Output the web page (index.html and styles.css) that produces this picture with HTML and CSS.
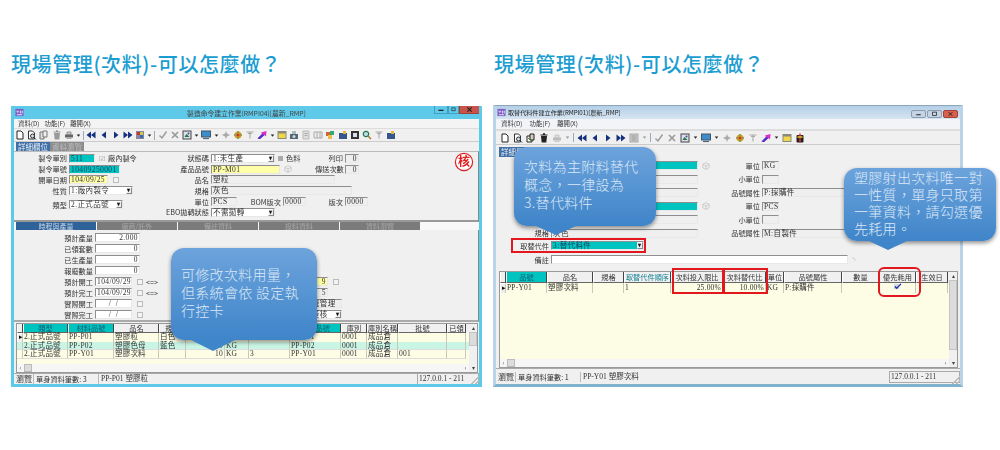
FILE: index.html
```html
<!DOCTYPE html>
<html lang="zh-Hant">
<head>
<meta charset="utf-8">
<title>現場管理(次料)</title>
<link rel="stylesheet" href="styles.css">
</head>
<body>
<svg class="defs" width="0" height="0">
  <symbol id="i-doc" viewBox="0 0 10 10"><path d="M2 1h4l2 2v6H2z" fill="#fff" stroke="#222"/></symbol>
  <symbol id="i-prev" viewBox="0 0 10 10"><path d="M1.500 1h4l2 2v6h-6z" fill="#fff" stroke="#333"/><circle cx="5.500" cy="6" r="2" fill="#cde" stroke="#333"/><path d="M7 7.500l2 2" stroke="#333"/></symbol>
  <symbol id="i-copy" viewBox="0 0 10 10"><path d="M1 2h4v7H1z" fill="#ddd" stroke="#777"/><path d="M4 1h4v6H4z" fill="#eee" stroke="#777"/></symbol>
  <symbol id="i-copyd" viewBox="0 0 10 10"><path d="M1 3h5v6H1z" fill="#fff" stroke="#222"/><path d="M4 1h4v6H4z" fill="#dcb" stroke="#222"/><path d="M2 5l4 3" stroke="#2a7a2a"/></symbol>
  <symbol id="i-trash" viewBox="0 0 10 10"><path d="M2 3h6l-.7 6.500H2.700z" fill="#999"/><path d="M1.500 2h7M4 .8h2" stroke="#999" stroke-width="1.200"/></symbol>
  <symbol id="i-trashd" viewBox="0 0 10 10"><path d="M2 3h6l-.7 6.500H2.700z" fill="#222"/><path d="M1.500 2h7M4 .8h2" stroke="#222" stroke-width="1.200"/></symbol>
  <symbol id="i-print" viewBox="0 0 10 10"><path d="M1 4.500h8v3H1z" fill="#666"/><path d="M3 2h4v2.500H3z" fill="#ccc" stroke="#666" stroke-width=".6"/><path d="M2.500 7.500h5v1.500h-5z" fill="#aaa"/></symbol>
  <symbol id="i-printl" viewBox="0 0 10 10"><path d="M1 4.500h8v3H1z" fill="#bbb"/><path d="M3 2h4v2.500H3z" fill="#ddd" stroke="#bbb" stroke-width=".6"/><path d="M2.500 7.500h5v1.500h-5z" fill="#ccc"/></symbol>
  <symbol id="i-first" viewBox="0 0 10 10"><path d="M5 1.500v7L.5 5zM9.500 1.500v7L5 5z" fill="#14307f"/></symbol>
  <symbol id="i-left" viewBox="0 0 10 10"><path d="M7 1.500v7L2.500 5z" fill="#14307f"/></symbol>
  <symbol id="i-right" viewBox="0 0 10 10"><path d="M3 1.500v7L7.500 5z" fill="#14307f"/></symbol>
  <symbol id="i-last" viewBox="0 0 10 10"><path d="M.5 1.500v7L5 5zM5 1.500v7L9.500 5z" fill="#14307f"/></symbol>
  <symbol id="i-pic" viewBox="0 0 10 10"><rect x="1" y="1" width="8" height="8" fill="#889"/><path d="M2 2h3v3H2z" fill="#c33"/><path d="M5 5h3v3H5z" fill="#36b"/><path d="M5 2h3v3H5z" fill="#cc4"/></symbol>
  <symbol id="i-picl" viewBox="0 0 10 10"><rect x="1" y="1" width="8" height="8" fill="#ccc" stroke="#aaa"/><path d="M2.500 3h5M2.500 5h5M2.500 7h5" stroke="#999"/></symbol>
  <symbol id="i-check" viewBox="0 0 10 10"><path d="M1.500 5.500L4 8l4.500-6.500" fill="none" stroke="#999" stroke-width="1.400"/></symbol>
  <symbol id="i-x" viewBox="0 0 10 10"><path d="M2 2l6 6M8 2L2 8" stroke="#999" stroke-width="1.600"/></symbol>
  <symbol id="i-img" viewBox="0 0 10 10"><rect x="1" y="1" width="8" height="8" fill="#dde" stroke="#444"/><path d="M2.500 7l2-3 3 3z" fill="#274"/><circle cx="6.500" cy="3.500" r="1" fill="#357"/></symbol>
  <symbol id="i-screen" viewBox="0 0 10 10"><rect x=".5" y="1" width="9" height="6" fill="#3b8ecb" stroke="#456"/><path d="M2 8.500h6" stroke="#567" stroke-width="1.200"/></symbol>
  <symbol id="i-gear" viewBox="0 0 10 10"><path d="M5 1l1 2.500L9 5 6 6.500 5 9 4 6.500 1 5l3-1.500z" fill="#aaa"/></symbol>
  <symbol id="i-flower" viewBox="0 0 10 10"><circle cx="5" cy="5" r="3.500" fill="#c9a227"/><circle cx="5" cy="5" r="1.500" fill="#c33"/><path d="M5 1v1.500M5 7.500V9M1 5h1.500M7.500 5H9" stroke="#3a7a3a"/></symbol>
  <symbol id="i-t" viewBox="0 0 10 10"><path d="M1.500 2h7M5 2v6.500M3 3.500h4" stroke="#aaa" stroke-width="1.100" fill="none"/></symbol>
  <symbol id="i-arrow" viewBox="0 0 10 10"><path d="M.5 8.500L5 4l-1-1.500L9.500 1 9 6.500 7.500 5 3 9z" fill="#d92cc8"/><path d="M5 4L7.500 5 3 9 .5 8.500z" fill="#4636c9"/></symbol>
  <symbol id="i-folder" viewBox="0 0 10 10"><rect x=".5" y="1" width="9" height="8" fill="#8a8a7a"/><path d="M1.500 3.500h7v4.500h-7z" fill="#ecd84a"/></symbol>
  <symbol id="i-db" viewBox="0 0 10 10"><path d="M1 4h8v5H1z" fill="#567"/><path d="M3 1h4v3H3z" fill="#abb"/><circle cx="5" cy="6.500" r="1.500" fill="#cdd"/></symbol>
  <symbol id="i-gray" viewBox="0 0 10 10"><path d="M2 1h6v8H2z" fill="#ddd" stroke="#bbb"/><path d="M3.500 3.500h3M3.500 5.500h3" stroke="#aaa"/></symbol>
  <symbol id="i-grid2" viewBox="0 0 10 10"><path d="M1 2h8v6H1z" fill="#eee" stroke="#aaa"/><path d="M4 2v6M7 2v6" stroke="#aaa"/></symbol>
  <symbol id="i-colors" viewBox="0 0 10 10"><path d="M1 2h4v4H1z" fill="#c63"/><path d="M5 1h4v4H5z" fill="#3a7"/><path d="M3 5h4v4H3z" fill="#eb4"/></symbol>
  <symbol id="i-app" viewBox="0 0 10 10"><rect x=".5" y="1" width="9" height="8" fill="#7c5cc4"/><path d="M2 3l1 2 1-2M6 3v3M8 3v3M2 7.500h6" stroke="#fff" fill="none" stroke-width=".9"/></symbol>
  <symbol id="i-blue" viewBox="0 0 10 10"><rect x="1" y="3" width="8" height="6" fill="#35558f"/><path d="M5 1h3v3H5z" fill="#e2b93b"/></symbol>
  <symbol id="i-film" viewBox="0 0 10 10"><rect x="1" y="1" width="8" height="8" fill="#333"/><rect x="3" y="3" width="4" height="4" fill="#dde"/></symbol>
  <symbol id="i-mag" viewBox="0 0 10 10"><circle cx="4" cy="4" r="2.700" fill="#bde" stroke="#274" stroke-width="1.200"/><path d="M6 6l3 3" stroke="#a73" stroke-width="1.500"/></symbol>
  <symbol id="i-gift" viewBox="0 0 10 10"><rect x="1.500" y="2" width="7" height="7.500" rx="1" fill="#222"/><path d="M5 .5v9" stroke="#d33" stroke-width="1.500"/><path d="M2.500 4h5" stroke="#e8c62a" stroke-width="1.500"/></symbol>
  <symbol id="i-dd" viewBox="0 0 10 10"><path d="M1.500 3h7L5 7.500z" fill="#222"/></symbol>
  <symbol id="i-ddl" viewBox="0 0 10 10"><path d="M1.500 3h7L5 7.500z" fill="#999"/></symbol>
  <symbol id="i-cube" viewBox="0 0 10 10"><path d="M5 .8L9 3v4.200L5 9.300 1 7.200V3zM1 3l4 2 4-2M5 5v4.300" fill="none" stroke="#bbb" stroke-width=".8"/></symbol>
  <symbol id="i-min" viewBox="0 0 14 8"><path d="M4 5h6" stroke="#222" stroke-width="1.500"/></symbol>
  <symbol id="i-max" viewBox="0 0 14 8"><rect x="4.500" y="1.500" width="5" height="4.500" fill="none" stroke="#222"/></symbol>
  <symbol id="i-close" viewBox="0 0 14 8"><path d="M4.500 1.500l5 5M9.500 1.500l-5 5" stroke="#222" stroke-width="1.300"/></symbol>
</svg>

<main class="page">

<section class="pane">
  <h1 class="heading">現場管理(次料)-可以怎麼做？</h1>
  <div class="win win-a">
    <div class="titlebar">
      <svg class="app"><use href="#i-app"/></svg>
      <span class="title-text">製造命令建立作業(RMPI04)[農新_RMP]</span>
      <div class="caps caps-a"><svg class="cap"><use href="#i-min"/></svg><svg class="cap cap-m"><use href="#i-max"/></svg><svg class="cap cap-x"><use href="#i-close"/></svg></div>
    </div>
    <div class="menu"><span>資料(D)</span><span>功能(F)</span><span>離開(X)</span></div>
    <div class="toolbar tb-a">
      <svg class="i"><use href="#i-doc"/></svg><svg class="i"><use href="#i-prev"/></svg><svg class="i"><use href="#i-copy"/></svg><svg class="i"><use href="#i-trash"/></svg><svg class="i"><use href="#i-print"/></svg><svg class="dd"><use href="#i-dd"/></svg><i class="sep"></i>
      <svg class="i"><use href="#i-first"/></svg><svg class="i"><use href="#i-left"/></svg><svg class="i"><use href="#i-right"/></svg><svg class="i"><use href="#i-last"/></svg><svg class="i"><use href="#i-pic"/></svg><svg class="dd"><use href="#i-dd"/></svg><i class="sep"></i>
      <svg class="i"><use href="#i-check"/></svg><svg class="i"><use href="#i-x"/></svg><svg class="i"><use href="#i-img"/></svg><svg class="dd"><use href="#i-dd"/></svg><svg class="i"><use href="#i-screen"/></svg><svg class="dd"><use href="#i-dd"/></svg>
      <svg class="i"><use href="#i-gear"/></svg><svg class="i"><use href="#i-flower"/></svg><svg class="i"><use href="#i-t"/></svg><svg class="i"><use href="#i-arrow"/></svg><svg class="dd"><use href="#i-dd"/></svg><svg class="i"><use href="#i-folder"/></svg><svg class="i"><use href="#i-db"/></svg><svg class="i"><use href="#i-gray"/></svg><svg class="i"><use href="#i-grid2"/></svg><svg class="i"><use href="#i-colors"/></svg><svg class="i"><use href="#i-blue"/></svg><svg class="i"><use href="#i-film"/></svg><svg class="i"><use href="#i-mag"/></svg><svg class="i"><use href="#i-t"/></svg><svg class="i"><use href="#i-blue"/></svg>
    </div>
    <div class="tabs tabs-a"><span class="tab on">詳細欄位</span><span class="tab">資料瀏覽</span></div>
    <div class="head-form">
      <div class="col col-a1">
        <div class="row"><label class="lb w52">製令單別</label><span class="f teal w26">511</span><span class="mk">☑</span><span class="tx">廠內製令</span></div>
        <div class="row"><label class="lb w52">製令單號</label><span class="f teal w51">10409250001</span></div>
        <div class="row"><label class="lb w52">開單日期</label><span class="f yel w39">104/09/25</span><span class="ck"></span></div>
        <div class="row"><label class="lb w52">性質</label><span class="f white w64 sel">1:廠內製令<b class="arr">▾</b></span></div>
        <div class="row row-gap"><label class="lb w52">類型</label><span class="f white w54 sel">2.正式品號<b class="arr">▾</b></span></div>
      </div>
      <div class="col col-a2">
        <div class="row"><label class="lb w52">狀態碼</label><span class="f white w64 sel">1:未生產<b class="arr">▾</b></span><span class="sq"></span><span class="tx">色料</span></div>
        <div class="row"><label class="lb w52">產品品號</label><span class="f yel w69">PP-M01</span><svg class="cube"><use href="#i-cube"/></svg></div>
        <div class="row"><label class="lb w52">品名</label><span class="f gray w124">塑粒</span></div>
        <div class="row"><label class="lb w52">規格</label><span class="f gray w141">灰色</span></div>
        <div class="row"><label class="lb w52">單位</label><span class="f gray w26">PCS</span><label class="lb w46">BOM版次</label><span class="f gray w23">0000</span></div>
        <div class="row"><label class="lb w52">EBO拋轉狀態</label><span class="f white w64 sel">不需拋轉<b class="arr">▾</b></span></div>
      </div>
      <div class="col col-a3">
        <div class="row"><label class="lb w30">列印</label><span class="f gray w13 r">0</span></div>
        <div class="row"><label class="lb w30">傳送次數</label><span class="f gray w13 r">0</span></div>
        <div class="row"></div><div class="row"></div>
        <div class="row"><label class="lb w30">版次</label><span class="f gray w23">0000</span></div>
      </div>
      <svg class="stamp" viewBox="0 0 20 20"><circle cx="10" cy="10" r="8.600" fill="#fff" stroke="#e01f1f" stroke-width="1.200"/><text x="10" y="14" text-anchor="middle" class="stamp-t">核</text></svg>
    </div>
    <div class="tabs tabs-b"><span class="tb2 on">時程與產量</span><span class="tb2">廠商/託外</span><span class="tb2">備註資料</span><span class="tb2">投料資料</span><span class="tb2">資料瀏覽</span></div>
    <div class="sched">
      <div class="col">
        <div class="row2"><label class="lb w82">預計產量</label><span class="f white w45 r">2.000</span></div>
        <div class="row2"><label class="lb w82">已領套數</label><span class="f white w45 r">0</span></div>
        <div class="row2"><label class="lb w82">已生產量</label><span class="f white w45 r">0</span></div>
        <div class="row2"><label class="lb w82">報廢數量</label><span class="f white w45 r">0</span></div>
        <div class="row2"><label class="lb w82">預計開工</label><span class="f white w37">104/09/29</span><span class="ck"></span><span class="tx">&lt;=&gt;</span></div>
        <div class="row2"><label class="lb w82">預計完工</label><span class="f white w37">104/09/29</span><span class="ck"></span><span class="tx">&lt;=&gt;</span></div>
        <div class="row2"><label class="lb w82">實際開工</label><span class="f white w37 c">/ &nbsp;/</span><span class="ck"></span></div>
        <div class="row2"><label class="lb w82">實際完工</label><span class="f white w37 c">/ &nbsp;/</span><span class="ck"></span></div>
      </div>
      <div class="col col-s2">
        <div class="row2"><span class="f yel w27 r">9</span><span class="ck"></span></div>
        <div class="row2"><span class="f gray w27 r">5</span></div>
        <div class="row2"><span class="f gray w40 shift">系統管理</span></div>
        <div class="row2"><span class="f white w40 shift sel">子簽核<b class="arr">▾</b></span></div>
      </div>
    </div>
    <div class="grid">
      <div class="g-body">
        <div class="gr gr-a gh"><span></span><span class="tc">類型</span><span class="tc">材料品號</span><span>品名</span><span>規格</span><span>顏色</span><span>單位</span><span>數</span><span class="tc">替代品號</span><span>庫別</span><span>庫別名稱</span><span>批號</span><span>已領</span></div>
        <div class="gr gr-a"><span class="ind">▸</span><span>2.正式品號</span><span>PP-P01</span><span>塑膠粒</span><span>白色</span><span class="r">10</span><span>KG</span><span></span><span>PP-P01</span><span>0001</span><span>成品倉</span><span></span><span></span></div>
        <div class="gr gr-a gn"><span></span><span>2.正式品號</span><span>PP-P02</span><span>塑膠色母</span><span>藍色</span><span class="r">10</span><span>KG</span><span></span><span>PP-P02</span><span>0001</span><span>成品倉</span><span></span><span></span></div>
        <div class="gr gr-a"><span></span><span>2.正式品號</span><span>PP-Y01</span><span>塑膠次料</span><span></span><span class="r">10</span><span>KG</span><span>3</span><span>PP-Y01</span><span>0001</span><span>成品倉</span><span>001</span><span></span></div>
        <div class="g-fill"></div>
        <div class="hs"><span class="hs-a">‹</span><span class="hs-t"></span><span class="hs-b">›</span></div>
      </div>
      <div class="vs"><span class="vs-a">▴</span><span class="vs-t"></span><span class="vs-a end">▾</span></div>
    </div>
    <div class="status">
      <span class="s1">瀏覽</span><span class="s2">單身資料筆數: 3</span><span class="s3">PP-P01 塑膠粒</span><span class="s4">127.0.0.1 - 211</span>
    </div>
  </div>
  <div class="bubble b1">可修改次料用量，<br>但系統會依 設定執<br>行控卡</div>
</section>

<section class="pane pane-b">
  <h1 class="heading">現場管理(次料)-可以怎麼做？</h1>
  <div class="win win-b">
    <div class="titlebar">
      <svg class="app"><use href="#i-app"/></svg>
      <span class="title-text lft">取替代料件建立作業(RMPI01)[農新_RMP]</span>
      <div class="caps caps-b"><svg class="cap"><use href="#i-min"/></svg><svg class="cap"><use href="#i-max"/></svg><svg class="cap cap-x"><use href="#i-close"/></svg></div>
    </div>
    <div class="menu"><span>資料(D)</span><span>功能(F)</span><span>離開(X)</span></div>
    <div class="toolbar tb-b">
      <svg class="i"><use href="#i-doc"/></svg><svg class="i"><use href="#i-prev"/></svg><svg class="i"><use href="#i-copyd"/></svg><svg class="i"><use href="#i-trashd"/></svg><svg class="i"><use href="#i-printl"/></svg><svg class="dd"><use href="#i-ddl"/></svg><i class="sep"></i>
      <svg class="i"><use href="#i-first"/></svg><svg class="i"><use href="#i-left"/></svg><svg class="i"><use href="#i-right"/></svg><svg class="i"><use href="#i-last"/></svg><svg class="i"><use href="#i-picl"/></svg><svg class="dd"><use href="#i-ddl"/></svg><i class="sep"></i>
      <svg class="i"><use href="#i-check"/></svg><svg class="i"><use href="#i-x"/></svg><svg class="i"><use href="#i-img"/></svg><svg class="dd"><use href="#i-dd"/></svg><svg class="i"><use href="#i-screen"/></svg><svg class="dd"><use href="#i-dd"/></svg>
      <svg class="i"><use href="#i-gear"/></svg><svg class="i"><use href="#i-flower"/></svg><svg class="i"><use href="#i-t"/></svg><svg class="i"><use href="#i-arrow"/></svg><svg class="dd"><use href="#i-dd"/></svg><svg class="i"><use href="#i-folder"/></svg><svg class="i"><use href="#i-gift"/></svg>
    </div>
    <div class="tabs tabs-c"><span class="tab on">詳細欄位</span></div>
    <div class="rform">
      <div class="col col-r1">
        <div class="row3"><span class="f teal w147"></span><svg class="cube"><use href="#i-cube"/></svg></div>
        <div class="row3"><span class="f gray w147"></span></div>
        <div class="row3"><span class="f gray w147"></span></div>
        <div class="row3"><span class="f teal w147"></span><svg class="cube"><use href="#i-cube"/></svg></div>
        <div class="row3"><span class="f gray w147"></span></div>
        <div class="row3"><label class="lb w38">規格</label><span class="f gray w147">灰色</span></div>
      </div>
      <div class="col col-r2">
        <div class="row3"><label class="lb w50">單位</label><span class="f gray w17">KG</span></div>
        <div class="row3"><label class="lb w50">小單位</label><span class="f gray w17"></span></div>
        <div class="row3"><label class="lb w50">品號屬性</label><span class="f gray w90">P:採購件</span></div>
        <div class="row3"><label class="lb w50">單位</label><span class="f gray w17">PCS</span></div>
        <div class="row3"><label class="lb w50">小單位</label><span class="f gray w17"></span></div>
        <div class="row3"><label class="lb w50">品號屬性</label><span class="f gray w90">M:自製件</span></div>
      </div>
    </div>
    <div class="row3 r-sub"><label class="lb w38">取替代件</label><span class="f teal w93 sel">3:替代料件<b class="arr">▾</b></span></div>
    <div class="row3 r-note"><label class="lb w38">備註</label><span class="f white w297"></span><span class="note-i">◝</span></div>
    <div class="grid grid-b">
      <div class="g-body">
        <div class="gr gr-b gh"><span></span><span class="tc">品號</span><span>品名</span><span>規格</span><span class="tc2">取替代件順序</span><span>次料投入限比</span><span>次料替代比</span><span>單位</span><span>品號屬性</span><span>數量</span><span>優先耗用</span><span>生效日</span></div>
        <div class="gr gr-b"><span class="ind">▸</span><span>PP-Y01</span><span>塑膠次料</span><span></span><span>1</span><span class="r">25.00%</span><span class="r">10.00%</span><span>KG</span><span>P:採購件</span><span></span><span class="tick"><svg class="tick-i" viewBox="0 0 10 8"><path d="M1 1h6v6H1z" fill="#cdd"/><path d="M2 4l2 2 5-5" fill="none" stroke="#2a2aa8" stroke-width="1.500"/></svg></span><span></span></div>
        <div class="g-fill"></div>
        <div class="hs"><span class="hs-a">‹</span><span class="hs-t"></span><span class="hs-b">›</span></div>
      </div>
      <div class="vs"><span class="vs-a">▴</span><span class="vs-t"></span><span class="vs-a end">▾</span></div>
    </div>
    <div class="status">
      <span class="s1">瀏覽</span><span class="s2">單身資料筆數: 1</span><span class="s3">PP-Y01 塑膠次料</span><span class="s4 s4b">127.0.0.1 - 211</span>
    </div>
  </div>
  <div class="mark m1"></div>
  <div class="mark m2"></div>
  <div class="mark m3"></div>
  <div class="mark m4"></div>
  <div class="bubble b2">次料為主附料替代<br>概念，一律設為<br>3.替代料件</div>
  <div class="bubble b3">塑膠射出次料唯一對<br>一性質，單身只取第<br>一筆資料，請勾選優<br>先耗用。</div>
</section>

</main>
</body>
</html>
```
FILE: styles.css
```css
* { box-sizing: border-box; }
html, body { margin: 0; height: 100%; background: #fff; overflow: hidden; }
body { font-family: "Noto Sans CJK TC", "Noto Sans", sans-serif; }
.defs { position: absolute; }
.page { display: flex; padding-left: 11px; height: 450px; }
.pane { position: relative; width: 482px; padding-top: 50px; }
.pane-b { width: 507px; }
.heading { margin: 0 0 28px; height: 28px; line-height: 28px; font-size: 20px; font-weight: 500; letter-spacing: .6px; color: #1b9dd1; white-space: nowrap; }
.pane-b .heading { margin-left: 1px; margin-bottom: 27px; }

/* window */
.win { display: flex; flex-direction: column; width: 471px; height: 281px; background: #f0f0f0; color: #333; font-size: 7.200px; line-height: 10px; filter: blur(.4px); overflow: hidden; }
.win-a { border: 3px solid #5fc9ea; border-top-width: 0; }
.win-b { width: 470px; height: 282px; border: 3px solid #b9d3e8; border-top-width: 1px; border-bottom-color: #7fb2cc; border-top-color: #8ca5b8; }
.titlebar { position: relative; display: flex; align-items: center; height: 13px; flex: none; margin: 0 -3px; padding: 0 4px; }
.win-a .titlebar { background: #5fc9ea; }
.win-b .titlebar { background: linear-gradient(#b4cfe7, #d6e4f1); }
.app { width: 9px; height: 9px; flex: none; }
.title-text { position: absolute; left: 0; right: 0; text-align: center; font-size: 6.800px; color: #444; }
.title-text.lft { left: 15px; text-align: left; font-size: 6.100px; color: #222; }
.caps { position: absolute; top: 0; display: flex; }
.caps-a { right: 2px; }
.caps-b { right: 5px; top: 4px; gap: 1px; }
.cap { display: block; width: 14px; height: 8px; background: #5fc9ea; border: 1px solid #3f9fc0; border-top: 0; }
.cap-m { width: 11px; }
.caps-b .cap { width: 15px; background: #c4d4e4; border: 1px solid #8a9cae; border-radius: 2px; }
.cap-x { width: 21px; background: #c8534a; border-color: #a04238; }
.caps-b .cap-x { background: #d9614f; border-color: #a04238; }
.menu { display: flex; gap: 5px; height: 10px; flex: none; padding-left: 4px; background: #f4f4f4; font-size: 6.400px; line-height: 10px; border-bottom: 1px solid #ddd; }
.win-b .menu { height: 11px; background: #f2f4f7; gap: 7px; padding-left: 5px; }
.toolbar { display: flex; align-items: center; flex: none; background: #f0f0f0; border-bottom: 1px solid #ccc; }
.tb-a { height: 13px; gap: 2.200px; padding-left: 1px; }
.tb-b { height: 15px; gap: 3px; padding-left: 4px; border-top: 1px solid #ddd; }
.i { width: 10px; height: 10px; flex: none; }
.dd { width: 5px; height: 9px; flex: none; }
.sep { width: 1px; height: 9px; background: #9ab; flex: none; }
.tabs { display: flex; flex: none; }
.tabs-a { height: 9px; padding-left: 2px; }
.tabs-c { height: 12px; padding: 2px 0 0 3px; background: #f0f0f0; }
.tab { width: 34px; text-align: center; background: #8c8c8c; color: #bbb; font-size: 7.500px; line-height: 9px; }
.tab.on { background: #3f6fa6; color: #e8eef5; }

/* forms */
.col { display: flex; flex-direction: column; }
.head-form { position: relative; display: flex; height: 71px; flex: none; padding: 1px 0 0 3px; border-top: 1px solid #bbb; border-bottom: 2px solid #999; border-right: 1px solid #888; }
.col-a1 { width: 142px; }
.col-a2 { width: 156px; }
.col-a3 { width: 60px; }
.row { display: flex; align-items: center; height: 10.800px; flex: none; }
.row-gap { margin-top: 3px; }
.row2 { display: flex; align-items: center; height: 11px; flex: none; }
.row3 { display: flex; align-items: center; height: 13.500px; flex: none; }
.lb { flex: none; text-align: right; padding-right: 2px; white-space: nowrap; }
.tx { margin-left: 3px; white-space: nowrap; }
.mk { margin-left: 4px; color: #999; font-size: 7px; }
.w30 { width: 30px; } .w38 { width: 38px; } .w46 { width: 46px; } .w50 { width: 50px; } .w52 { width: 52px; } .w82 { width: 81px; }
.f { display: block; position: relative; flex: none; height: 9px; line-height: 7px; padding: 0 1px; font-family: "Liberation Serif", "Noto Sans CJK TC", serif; font-size: 7.500px; letter-spacing: .4px; white-space: nowrap; border: 1px solid; border-color: #8e8e8e #e8e8e8 #e8e8e8 #8e8e8e; }
.teal { background: #00c4c0; color: #184060; }
.yel { background: #ffffa8; }
.white { background: #fff; }
.gray { background: #efefef; }
.r { text-align: right; }
.c { text-align: center; }
.shift { margin-left: 1px; }
.w13 { width: 14px; } .w17 { width: 17px; } .w23 { width: 23px; } .w26 { width: 26px; } .w27 { width: 27px; } .w37 { width: 37px; } .w39 { width: 39px; } .w40 { width: 40px; } .w45 { width: 45px; } .w51 { width: 51px; } .w54 { width: 54px; } .w64 { width: 64px; } .w69 { width: 69px; } .w90 { width: 90px; } .w93 { width: 93px; } .w124 { width: 124px; } .w141 { width: 141px; } .w147 { width: 147px; } .w297 { width: 297px; }
.sel { padding-right: 8px; }
.arr { position: absolute; right: 0; top: 0; width: 6px; height: 7px; font-size: 6px; line-height: 5px; text-align: center; background: #eee; color: #111; border: 1px solid #888; border-top-color: #fff; border-left-color: #fff; }
.ck { flex: none; width: 6px; height: 6px; margin-left: 5px; background: #f4f4f4; border: 1px solid #bbb; }
.sq { flex: none; width: 5px; height: 5px; margin-left: 3px; background: #aaa; }
.cube { flex: none; width: 8px; height: 8px; margin-left: 4px; }
.stamp { position: absolute; right: 4px; top: 0; width: 20px; height: 20px; }
.stamp-t { font-size: 12px; font-weight: 700; fill: #e01f1f; }
.tabs-b { height: 8px; padding-left: 2px; gap: 1px; background: #f8f8f8; }
.tb2 { width: 80px; background: #7b7b7b; color: #a8a8a8; font-size: 7px; line-height: 8px; text-align: center; }
.tb2.on { background: #2f6299; color: #c8d6e6; }
.sched { display: flex; height: 92px; flex: none; padding-top: 2px; border-bottom: 2px solid #aaa; border-right: 1px solid #888; }
.col-s2 { margin-left: 143px; padding-top: 44px; }
.rform { display: flex; height: 81px; flex: none; padding: 2px 0 0 55px; }
.col-r1 { flex: 0 0 161px; }
.col-r1 .row3:last-child { margin-left: -38px; }
.r-sub { padding-left: 17px; height: 15px; }
.r-note { padding-left: 17px; height: 13px; }
.note-i { margin-left: 4px; color: #bbb; font-size: 9px; }

/* grids */
.grid { display: flex; height: 50px; flex: none; margin: 1px 1px 0 2px; border: 1px solid #999; background: #fff; }
.grid-b { height: 97px; margin: 5px 2px 0 3px; }
.g-body { display: flex; flex-direction: column; flex: 1; min-width: 0; }
.gr { display: grid; height: 8.500px; flex: none; font-family: "Liberation Serif", "Noto Sans CJK TC", serif; font-size: 7.500px; line-height: 7.500px; background: #fdfde6; letter-spacing: .2px; }
.gr-a { grid-template-columns: 6px 45px 46px 45px 27px 39px 24px 41px 51px 26px 31px 49px 19px; }
.gr-b { grid-template-columns: 6px 41px 46px 31px 47px 52px 43px 18px 58px 37px 37px 32px; height: 10px; line-height: 9px; }
.gr > span { padding: 0 1px; border-right: 1px solid #c8c8b8; border-bottom: 1px solid #ddd; white-space: nowrap; min-width: 0; }
.gn { background: #c9f5e4; }
.gh { height: 9px; background: #f0f0f0; text-align: center; color: #333; font-family: "Noto Sans CJK TC", sans-serif; font-size: 7.200px; line-height: 8px; letter-spacing: 0; }
.gh > span { padding: 0; border-right: 1px solid #444; border-bottom: 1px solid #666; border-left: 1px solid #fff; }
.gr-b.gh { height: 11px; line-height: 10px; }
.gh .tc { background: #00c4c0; color: #145a70; }
.gh .tc2 { background: #f0f0f0; color: #0b7f90; }
.ind { background: #eee; color: #111; font-size: 7px; border: 1px solid #777; border-top-color: #fff; border-left-color: #fff; }
.tick { text-align: center; }
.tick-i { width: 9px; height: 7px; }
.g-fill { flex: 1; background: #fdfde6; }
.hs { display: flex; height: 8px; flex: none; background: #f6f6f6; font-size: 6px; line-height: 7px; color: #555; }
.hs-a { width: 7px; text-align: center; }
.hs-t { width: 8px; background: #dcdcdc; border: 1px solid #bbb; }
.hs-b { margin-left: auto; width: 7px; text-align: center; }
.vs { display: flex; flex-direction: column; width: 8px; flex: none; background: #f0f0f0; font-size: 6px; line-height: 8px; text-align: center; color: #444; }
.vs-a { height: 8px; flex: none; }
.vs-a.end { margin-top: auto; }
.vs-t { height: 70px; flex: none; background: #dcdcdc; border: 1px solid #c4c4c4; }
.win-a .vs-t { height: 14px; }
.status { position: relative; display: flex; align-items: center; flex: 1; border-top: 1px solid #aaa; min-height: 0; }
.status::after { content: ""; position: absolute; right: 0; bottom: 0; width: 8px; height: 8px; background: linear-gradient(135deg, transparent 50%, #bbb 50%, #bbb 60%, transparent 60%, transparent 75%, #bbb 75%, #bbb 85%, transparent 85%); }
.s1 { width: 19px; padding-left: 2px; flex: none; font-size: 8px; }
.s2 { width: 65px; flex: none; padding-left: 2px; border-left: 1px solid #bbb; }
.s3 { flex: 1; padding-left: 2px; border-left: 1px solid #bbb; font-family: "Liberation Serif", "Noto Sans CJK TC", serif; font-size: 7.500px; }
.s4 { width: 62px; flex: none; padding-left: 1px; border: 1px solid #aaa; font-family: "Liberation Serif", serif; font-size: 7.500px; }
.s4b { width: 71px; }

/* callouts */
.bubble { position: absolute; color: #dbe8f6; font-size: 14px; line-height: 18px; letter-spacing: .3px; padding: 0 10px 5px; border-radius: 13px; background: linear-gradient(#6da3dc, #3f85c9); box-shadow: 0 2px 4px rgba(0,0,0,.45); display: flex; align-items: center; font-weight: 300; }
.bubble::after { content: ""; position: absolute; border-style: solid; border-color: #3f85c9 transparent transparent; }
.b1 { left: 160px; top: 248px; width: 146px; height: 92px; }
.b1::after { left: 20px; top: 92px; border-width: 11px 22px 0; }
.b2 { left: 21px; top: 147px; width: 142px; height: 79px; }
.b2::after { left: 22px; top: 79px; border-width: 9px 20px 0; }
.b3 { left: 351px; top: 168px; width: 152px; height: 73px; line-height: 17px; padding-bottom: 3px; }
.b3::after { left: 25px; top: 73px; border-width: 9px 19px 0; }
.mark { position: absolute; border: 2px solid #e3181e; }
.m1 { left: 18px; top: 238px; width: 135px; height: 15px; }
.m2 { left: 179px; top: 268px; width: 52px; height: 26px; }
.m3 { left: 230px; top: 268px; width: 45px; height: 26px; }
.m4 { left: 385px; top: 267px; width: 43px; height: 30px; border-width: 2.500px; border-radius: 6px; }
```
